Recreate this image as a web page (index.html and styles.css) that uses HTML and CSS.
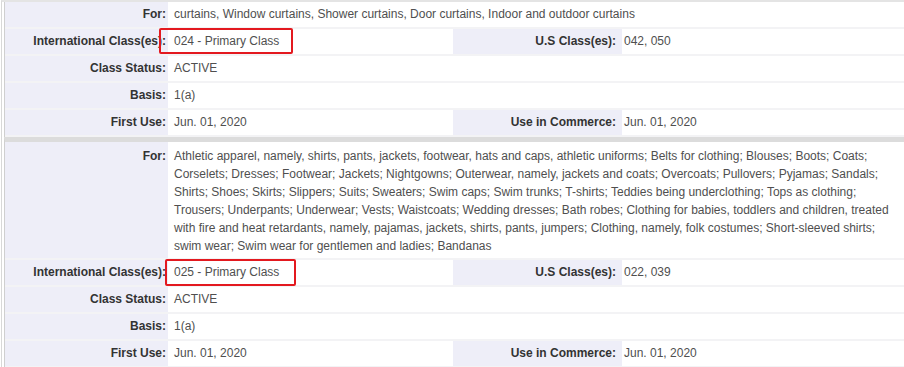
FILE: index.html
```html
<!DOCTYPE html>
<html>
<head>
<meta charset="utf-8">
<link rel="stylesheet" href="styles.css">
</head>
<body>
<div class="page">
  <div class="section">
    <div class="grid">
      <div class="label">For:</div>
      <div class="value span">curtains, Window curtains, Shower curtains, Door curtains, Indoor and outdoor curtains</div>

      <div class="label">International Class(es):</div>
      <div class="value mark-host">024 - Primary Class<span class="mark mark-a"></span></div>
      <div class="label label2">U.S Class(es):</div>
      <div class="value value2">042, 050</div>

      <div class="label">Class Status:</div>
      <div class="value span">ACTIVE</div>

      <div class="label">Basis:</div>
      <div class="value span">1(a)</div>

      <div class="label">First Use:</div>
      <div class="value">Jun. 01, 2020</div>
      <div class="label label2">Use in Commerce:</div>
      <div class="value value2">Jun. 01, 2020</div>
    </div>
  </div>

  <div class="section section-next">
    <div class="grid">
      <div class="label label-top">For:</div>
      <div class="value span multi">Athletic apparel, namely, shirts, pants, jackets, footwear, hats and caps, athletic uniforms; Belts for clothing; Blouses; Boots; Coats; Corselets; Dresses; Footwear; Jackets; Nightgowns; Outerwear, namely, jackets and coats; Overcoats; Pullovers; Pyjamas; Sandals; Shirts; Shoes; Skirts; Slippers; Suits; Sweaters; Swim caps; Swim trunks; T-shirts; Teddies being underclothing; Tops as clothing; Trousers; Underpants; Underwear; Vests; Waistcoats; Wedding dresses; Bath robes; Clothing for babies, toddlers and children, treated with fire and heat retardants, namely, pajamas, jackets, shirts, pants, jumpers; Clothing, namely, folk costumes; Short-sleeved shirts; swim wear; Swim wear for gentlemen and ladies; Bandanas</div>

      <div class="label">International Class(es):</div>
      <div class="value mark-host">025 - Primary Class<span class="mark mark-b"></span></div>
      <div class="label label2">U.S Class(es):</div>
      <div class="value value2">022, 039</div>

      <div class="label">Class Status:</div>
      <div class="value span">ACTIVE</div>

      <div class="label">Basis:</div>
      <div class="value span">1(a)</div>

      <div class="label">First Use:</div>
      <div class="value">Jun. 01, 2020</div>
      <div class="label label2">Use in Commerce:</div>
      <div class="value value2">Jun. 01, 2020</div>
    </div>
  </div>
</div>
</body>
</html>
```

FILE: styles.css
```css
html, body {
  margin: 0;
  padding: 0;
  background: #ffffff;
  overflow: hidden;
}

body {
  font-family: "Liberation Sans", Arial, sans-serif;
  font-size: 12px;
}

.page {
  margin-left: 1px;
  border-left: 1px solid #d8d8d8;
  padding-left: 2px;
  border-top: 2px solid #e4e4e4;
}

.section {
  border-left: 1px solid #cfcfcf;
  background: #f3f3f5;
}

.section-next {
  border-top: 5px solid #dcdcdc;
}

.grid {
  display: grid;
  grid-template-columns: 163px 285px 169px 1fr;
  row-gap: 2px;
  padding-bottom: 2px;
}

.label {
  background: #eeeef8;
  color: #333333;
  font-weight: bold;
  text-align: right;
  padding: 0 2px 0 0;
  height: 25px;
  line-height: 25px;
  white-space: nowrap;
}

.label2 {
  padding-right: 6px;
}

.label-top {
  height: auto;
  line-height: 18px;
  padding-top: 5px;
}

.value {
  background: #ffffff;
  color: #4f4f4f;
  height: 25px;
  line-height: 25px;
  padding-left: 6px;
  white-space: nowrap;
}

.value2 {
  padding-left: 2px;
}

.span {
  grid-column: 2 / -1;
}

.multi {
  height: auto;
  white-space: normal;
  line-height: 18px;
  padding: 5px 6px 3px 6px;
}

.mark-host {
  position: relative;
}

.mark {
  position: absolute;
  border: 2px solid #e3191f;
  border-radius: 2px;
  box-sizing: border-box;
  pointer-events: none;
}

.mark-a {
  left: -9px;
  top: -1px;
  width: 134px;
  height: 26px;
}

.mark-b {
  left: -3px;
  top: -1px;
  width: 131px;
  height: 27px;
}
```
